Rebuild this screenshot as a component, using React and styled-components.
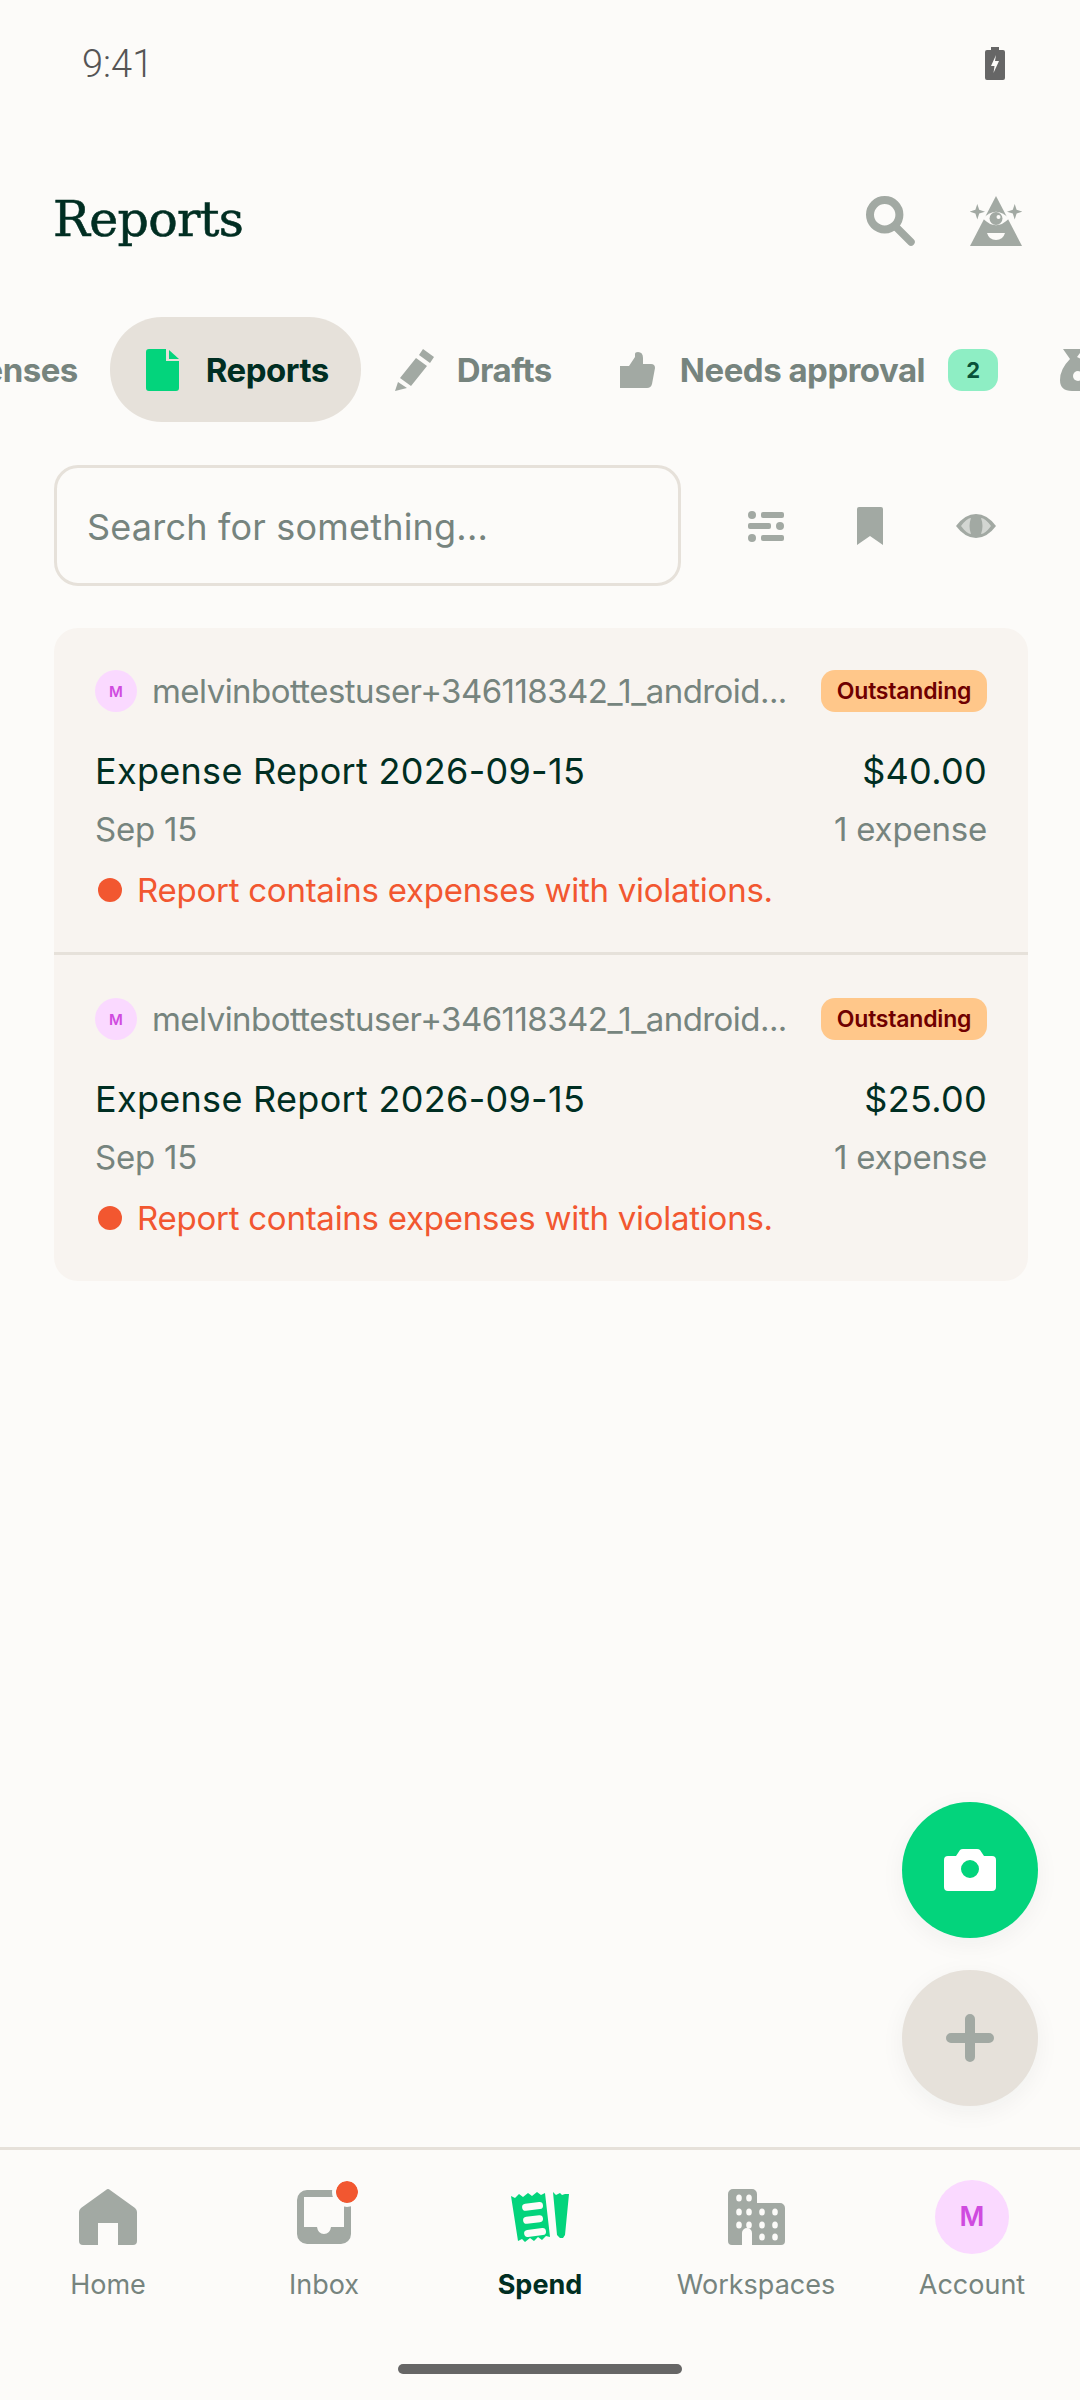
import React from 'react';
import styled, { createGlobalStyle } from 'styled-components';

const GlobalStyle = createGlobalStyle`
  html, body { margin: 0; padding: 0; background: #fcfbf9; }
  * { box-sizing: border-box; }
`;

const Screen = styled.div`
  position: relative;
  width: 1080px;
  height: 2400px;
  overflow: hidden;
  display: flex;
  flex-direction: column;
  background: #fcfbf9;
  font-family: Inter, "Noto Sans", sans-serif;
  color: #002e22;
`;

const StatusBar = styled.div`
  height: 126px;
  padding: 44px 75px 0 82px;
  display: flex;
  justify-content: space-between;
  align-items: flex-start;
  font-family: Roboto, sans-serif;
  font-size: 38px;
  font-weight: 300;
  line-height: 40px;
  color: #555;
`;

const Header = styled.div`
  height: 122px;
  padding: 66px 58px 0 53px;
  display: flex;
  align-items: center;
  justify-content: space-between;
`;

const Title = styled.h1`
  margin: 0;
  font-family: "DejaVu Serif", serif;
  font-size: 49px;
  line-height: 56px;
  font-weight: 400;
  letter-spacing: -0.7px;
  -webkit-text-stroke: 0.6px #002e22;
`;

const HeaderIcons = styled.div`
  display: flex;
  align-items: center;
  gap: 55px;
  margin-top: 2px;
`;

const TabStrip = styled.div`
  margin: 69px 0 0 -75px;
  height: 105px;
  display: flex;
  align-items: center;
  white-space: nowrap;
`;

const Tab = styled.div`
  height: 105px;
  display: flex;
  align-items: center;
  gap: ${p => p.$gap || 24}px;
  padding: 0 ${p => p.$padR ?? 32}px 0 ${p => p.$padL ?? 36}px;
  border-radius: 52px;
  background: ${p => (p.$active ? '#e6e1da' : 'transparent')};
  color: ${p => (p.$active ? '#002e22' : '#76847e')};
  font-size: 33px;
  font-weight: 700;
  letter-spacing: -0.5px;
`;

const CountBadge = styled.span`
  width: 50px;
  height: 42px;
  margin-left: -2px;
  border-radius: 14px;
  display: flex;
  align-items: center;
  justify-content: center;
  background: #8eeec4;
  color: #085239;
  font-size: 22px;
  font-weight: 700;
`;

const SearchRow = styled.div`
  margin-top: 43px;
  padding: 0 84px 0 54px;
  display: flex;
  align-items: center;
`;

const SearchBox = styled.div`
  width: 627px;
  height: 121px;
  padding: 2px 0 0 30px;
  display: flex;
  align-items: center;
  border: 3px solid #e6e1da;
  border-radius: 24px;
  font-size: 36px;
  color: #76847e;
  letter-spacing: 0.2px;
`;

const SearchTools = styled.div`
  flex: 1;
  display: flex;
  justify-content: space-between;
  align-items: center;
  padding-left: 67px;
`;

const ReportList = styled.div`
  margin: 42px 52px 0 54px;
  border-radius: 24px;
  overflow: hidden;
  background: #f8f4f0;
`;

const ReportRow = styled.div`
  height: 324px;
  padding: 42px 41px 0;
  display: flex;
  flex-direction: column;
  & + & {
    height: 329px;
    border-top: 3px solid #e6e1da;
    padding-top: 43px;
  }
`;

const FromLine = styled.div`
  height: 42px;
  display: flex;
  align-items: center;
`;

const Avatar = styled.span`
  width: ${p => p.$size}px;
  height: ${p => p.$size}px;
  flex: none;
  border-radius: 50%;
  display: flex;
  align-items: center;
  justify-content: center;
  background: #fad9ff;
  color: #cf4bdf;
  font-size: ${p => p.$font}px;
  font-weight: 600;
`;

const Email = styled.span`
  flex: 1;
  margin-left: 15px;
  font-size: 33px;
  letter-spacing: -0.55px;
  color: #76847e;
  white-space: nowrap;
  overflow: hidden;
`;

const StatusPill = styled.span`
  width: 166px;
  height: 42px;
  flex: none;
  border-radius: 14px;
  display: flex;
  align-items: center;
  justify-content: center;
  background: #ffc78a;
  color: #6f0000;
  font-size: 23px;
  font-weight: 600;
  letter-spacing: -0.2px;
`;

const Line = styled.div`
  display: flex;
  justify-content: space-between;
  align-items: center;
  height: ${p => p.$height}px;
  margin-top: ${p => p.$top}px;
  font-size: ${p => p.$size}px;
  letter-spacing: ${p => p.$track}px;
  color: ${p => p.$color};
`;

const Violation = styled.div`
  height: 42px;
  margin-top: 20px;
  display: flex;
  align-items: center;
  gap: 15px;
  padding-left: 3px;
  font-size: 33px;
  letter-spacing: -0.25px;
  color: #f25730;
`;

const Dot = styled.span`
  width: ${p => p.$size || 24}px;
  height: ${p => p.$size || 24}px;
  border-radius: 50%;
  background: #f25730;
  flex: none;
`;

const Fab = styled.div`
  position: absolute;
  right: 42px;
  top: ${p => p.$top}px;
  width: 136px;
  height: 136px;
  border-radius: 50%;
  display: flex;
  align-items: center;
  justify-content: center;
  background: ${p => p.$bg};
  box-shadow: 0 6px 24px rgba(0, 46, 34, 0.05);
`;

const NavBar = styled.nav`
  position: absolute;
  left: 0;
  right: 0;
  bottom: 0;
  height: 253px;
  border-top: 3px solid #e6e1da;
  display: flex;
  align-items: flex-start;
  padding-top: 30px;
`;

const NavItem = styled.div`
  flex: 1;
  display: flex;
  flex-direction: column;
  align-items: center;
  font-size: 27px;
  line-height: 34px;
  color: ${p => (p.$active ? '#002e22' : '#76847e')};
  font-weight: ${p => (p.$active ? 700 : 400)};
`;

const NavIcon = styled.div`
  position: relative;
  height: 74px;
  margin-bottom: 14px;
  display: flex;
  align-items: center;
  justify-content: center;
`;

const InboxDot = styled(Dot)`
  position: absolute;
  right: -7px;
  top: 1px;
  outline: 4px solid #fcfbf9;
`;

const HomeBar = styled.div`
  position: absolute;
  left: 398px;
  bottom: 26px;
  width: 284px;
  height: 10px;
  border-radius: 5px;
  background: #666;
`;

const GREY = '#a2a9a3';
const PAGE = '#fcfbf9';

const Battery = () => (
  <svg width="20" height="33" viewBox="0 0 20 33" style={{ marginTop: 3 }}>
    <path d="M6 0h8v3h4a2 2 0 0 1 2 2v26a2 2 0 0 1-2 2H2a2 2 0 0 1-2-2V5a2 2 0 0 1 2-2h4z" fill="#666" />
    <path d="M11 8l-5 11h3.500l-1 7 5.500-12H10z" fill={PAGE} />
  </svg>
);

const SearchIcon = () => (
  <svg width="49" height="50" viewBox="0 0 49 50">
    <circle cx="18.700" cy="18.700" r="14.700" fill="none" stroke={GREY} strokeWidth="8" />
    <path d="M30 31l15 15" stroke={GREY} strokeWidth="7.500" strokeLinecap="round" />
  </svg>
);

const Oracle = () => (
  <svg width="52" height="50" viewBox="0 0 52 50">
    <path d="M26 0L52 50H0z" fill={GREY} />
    <path d="M13 22.500Q26 9 39 22.500Q26 36 13 22.500z" fill={PAGE} />
    <circle cx="26" cy="22.500" r="6.500" fill={GREY} />
    <circle cx="28.500" cy="21" r="2" fill={PAGE} />
    <path d="M17 37h18q-2 7-9 7t-9-7z" fill={PAGE} />
    <path d="M7.300 8l1.900 5.800 5.800 1.900-5.800 1.900-1.900 5.800-1.900-5.800L-.400 15.700l5.800-1.900zM44.700 8l1.900 5.800 5.800 1.900-5.800 1.900-1.900 5.800-1.900-5.800-5.800-1.900 5.800-1.900z" fill={GREY} />
  </svg>
);

const DocIcon = () => (
  <svg width="33" height="42" viewBox="0 0 33 42">
    <path d="M3 0h17v12h13v27a3 3 0 0 1-3 3H3a3 3 0 0 1-3-3V3a3 3 0 0 1 3-3z" fill="#03d47c" />
    <path d="M23 1l10 9H23z" fill="#03d47c" />
  </svg>
);

const Pencil = () => (
  <svg width="39" height="42" viewBox="0 0 39 42">
    <path d="M28 0l11 8-4 6-11-8zM21 9l11 8-16 20-11-8zM3 33l9 6-12 3z" fill={GREY} />
  </svg>
);

const Thumb = () => (
  <svg width="35" height="36" viewBox="0 0 35 36">
    <path d="M0 14h9l6-9V2q0-2 3-2 5 0 5 6v6h8q4 0 4 4l-3 16q-1 4-5 4H0z" fill={GREY} />
  </svg>
);

const MoneyBag = () => (
  <svg width="40" height="42" viewBox="0 0 40 42">
    <path d="M3 0h20l-6 8q23 12 23 24 0 10-12 10H12Q0 42 0 31 0 20 10 10z" fill={GREY} />
    <circle cx="18" cy="27" r="5" fill={PAGE} />
  </svg>
);

const Sliders = () => (
  <svg width="36" height="32" viewBox="0 0 36 32">
    <g fill={GREY}>
      <rect x="0" y="1" width="8" height="8" rx="4" />
      <rect x="13" y="2" width="23" height="6" rx="2" />
      <rect x="0" y="13" width="23" height="6" rx="2" />
      <rect x="28" y="12" width="8" height="8" rx="4" />
      <rect x="0" y="24" width="8" height="8" rx="4" />
      <rect x="13" y="25" width="23" height="6" rx="2" />
    </g>
  </svg>
);

const Bookmark = () => (
  <svg width="26" height="38" viewBox="0 0 26 38">
    <path d="M2 0h22a2 2 0 0 1 2 2v36L13 29 0 38V2a2 2 0 0 1 2-2z" fill={GREY} />
  </svg>
);

const Eye = () => (
  <svg width="40" height="24" viewBox="0 0 40 24">
    <path d="M0 12Q9 0 20 0t20 12Q31 24 20 24T0 12z" fill={GREY} />
    <path d="M5 12Q11 4 15 4q-3 8 0 16-4 0-10-8zM35 12Q29 4 25 4q3 8 0 16 4 0 10-8z" fill={PAGE} opacity="0.55" />
  </svg>
);

const Camera = () => (
  <svg width="52" height="42" viewBox="0 0 52 42">
    <path fillRule="evenodd" d="M4 7h8l4-6q1-1 3-1h14q2 0 3 1l4 6h8a4 4 0 0 1 4 4v27a4 4 0 0 1-4 4H4a4 4 0 0 1-4-4V11a4 4 0 0 1 4-4zm22 4a9 9 0 1 0 0 18 9 9 0 0 0 0-18z" fill="#fff" />
  </svg>
);

const Plus = () => (
  <svg width="48" height="48" viewBox="0 0 48 48">
    <path d="M24 5v38M5 24h38" stroke={GREY} strokeWidth="10" strokeLinecap="round" />
  </svg>
);

const HomeIcon = () => (
  <svg width="58" height="56" viewBox="0 0 58 56">
    <path fillRule="evenodd" d="M27 1q2-2 4 0l25 18q2 2 2 4v29a4 4 0 0 1-4 4H39V34H19v22H4a4 4 0 0 1-4-4V23q0-2 2-4z" fill={GREY} />
  </svg>
);

const InboxIcon = () => (
  <svg width="54" height="54" viewBox="0 0 54 54">
    <path fillRule="evenodd" d="M10 0h44v44a10 10 0 0 1-10 10H10A10 10 0 0 1 0 44V10A10 10 0 0 1 10 0zm-3 7v30h13q1 7 7 7t7-7h13V7z" fill={GREY} />
  </svg>
);

const SpendIcon = () => (
  <svg width="58" height="56" viewBox="0 0 58 56">
    <path d="M0 7l4 2 4-4 4 3 5-4 4 3 5-4 4 3 4-2 5 44-4-1-4 4-4-3-4 4-4-3-5 4-3-3-4 2z" fill="#03d47c" />
    <path d="M42 3l3 3 4-2 2 2 3-1 4 0-4 41-2 3-3 0-3-3z" fill="#03d47c" />
    <g fill={PAGE}>
      <rect x="11" y="14" width="21" height="7" rx="3.500" transform="rotate(-7 21 17)" />
      <rect x="12" y="27" width="20" height="7" rx="3.500" transform="rotate(-7 22 30)" />
      <rect x="13" y="40" width="22" height="7" rx="3.500" transform="rotate(-7 24 43)" />
    </g>
  </svg>
);

const WorkspaceIcon = () => (
  <svg width="57" height="56" viewBox="0 0 57 56">
    <path d="M5 0h19a5 5 0 0 1 5 5v9h23a5 5 0 0 1 5 5v33a4 4 0 0 1-4 4H24V44a5 5 0 0 0-10 0v12H4a4 4 0 0 1-4-4V5a5 5 0 0 1 5-5z" fill={GREY} />
    <g fill={PAGE}>
      {[[11, 9], [21, 9], [11, 23], [21, 23], [34, 23], [47, 23], [11, 36], [21, 36], [34, 36], [47, 36], [34, 48], [47, 48]].map(([x, y]) => (
        <ellipse key={`${x}-${y}`} cx={x} cy={y} rx="2.800" ry="3.500" />
      ))}
    </g>
  </svg>
);

const reports = [
  { amount: '$40.00' },
  { amount: '$25.00' },
];

export default function App() {
  return (
    <Screen>
      <GlobalStyle />
      <StatusBar>
        <span>9:41</span>
        <Battery />
      </StatusBar>
      <Header>
        <Title>Reports</Title>
        <HeaderIcons>
          <SearchIcon />
          <Oracle />
        </HeaderIcons>
      </Header>
      <TabStrip>
        <Tab $padL={0} $padR={32}>Expenses</Tab>
        <Tab $active $gap={27} $padR={32}><DocIcon />Reports</Tab>
        <Tab $padL={34} $padR={34} $gap={23}><Pencil />Drafts</Tab>
        <Tab $padL={34} $gap={25}><Thumb />Needs approval<CountBadge>2</CountBadge></Tab>
        <Tab $padL={30}><MoneyBag /></Tab>
      </TabStrip>
      <SearchRow>
        <SearchBox>Search for something...</SearchBox>
        <SearchTools>
          <Sliders />
          <Bookmark />
          <Eye />
        </SearchTools>
      </SearchRow>
      <ReportList>
        {reports.map(r => (
          <ReportRow key={r.amount}>
            <FromLine>
              <Avatar $size={42} $font={15}>M</Avatar>
              <Email>melvinbottestuser+346118342_1_android...</Email>
              <StatusPill>Outstanding</StatusPill>
            </FromLine>
            <Line $height={44} $top={37} $size={36} $track={0.3} $color="#002e22">
              <span>Expense Report 2026-09-15</span>
              <span>{r.amount}</span>
            </Line>
            <Line $height={40} $top={16} $size={33} $track={-0.2} $color="#76847e">
              <span>Sep 15</span>
              <span>1 expense</span>
            </Line>
            <Violation>
              <Dot />
              Report contains expenses with violations.
            </Violation>
          </ReportRow>
        ))}
      </ReportList>
      <Fab $top={1802} $bg="#03d47c"><Camera /></Fab>
      <Fab $top={1970} $bg="#e6e1da"><Plus /></Fab>
      <NavBar>
        <NavItem>
          <NavIcon><HomeIcon /></NavIcon>
          Home
        </NavItem>
        <NavItem>
          <NavIcon><InboxIcon /><InboxDot $size={22} /></NavIcon>
          Inbox
        </NavItem>
        <NavItem $active>
          <NavIcon><SpendIcon /></NavIcon>
          Spend
        </NavItem>
        <NavItem>
          <NavIcon><WorkspaceIcon /></NavIcon>
          Workspaces
        </NavItem>
        <NavItem>
          <NavIcon><Avatar $size={74} $font={27}>M</Avatar></NavIcon>
          Account
        </NavItem>
      </NavBar>
      <HomeBar />
    </Screen>
  );
}
